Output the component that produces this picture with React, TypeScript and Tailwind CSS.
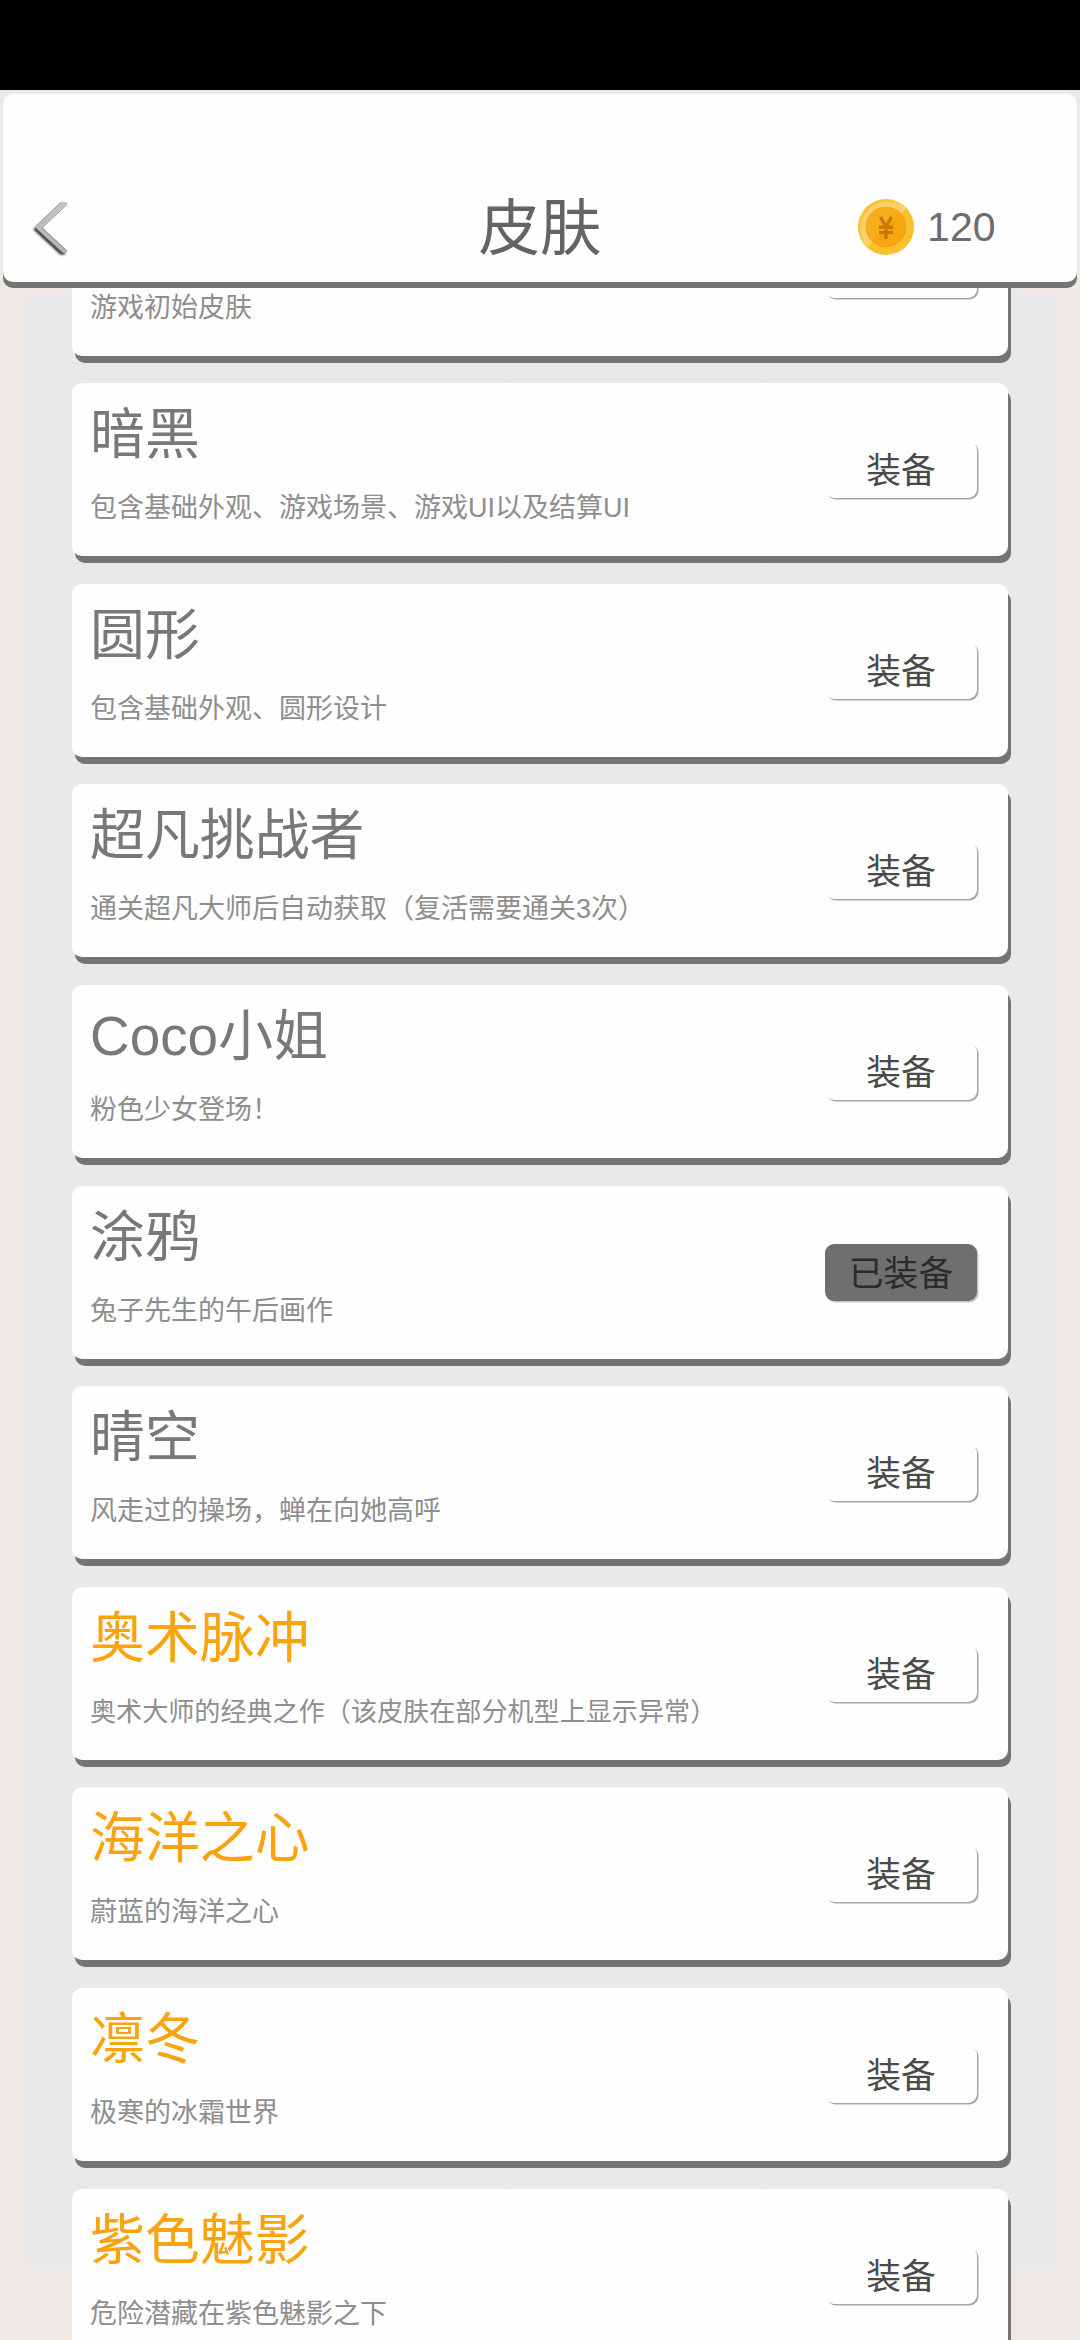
type Skin = { name: string; desc: string; action: string; premium?: boolean; equipped?: boolean; compact?: boolean };

const skins: Skin[] = [
  { name: '', desc: '游戏初始皮肤', action: '' },
  { name: '暗黑', desc: '包含基础外观、游戏场景、游戏UI以及结算UI', action: '装备' },
  { name: '圆形', desc: '包含基础外观、圆形设计', action: '装备' },
  { name: '超凡挑战者', desc: '通关超凡大师后自动获取（复活需要通关3次）', action: '装备' },
  { name: 'Coco小姐', desc: '粉色少女登场！', action: '装备' },
  { name: '涂鸦', desc: '兔子先生的午后画作', action: '已装备', equipped: true },
  { name: '晴空', desc: '风走过的操场，蝉在向她高呼', action: '装备' },
  { name: '奥术脉冲', desc: '奥术大师的经典之作（该皮肤在部分机型上显示异常）', action: '装备', premium: true, compact: true },
  { name: '海洋之心', desc: '蔚蓝的海洋之心', action: '装备', premium: true },
  { name: '凛冬', desc: '极寒的冰霜世界', action: '装备', premium: true },
  { name: '紫色魅影', desc: '危险潜藏在紫色魅影之下', action: '装备', premium: true },
];

function BackArrow() {
  return (
    <svg width="40" height="58" viewBox="0 0 40 58" fill="none">
      <defs>
        <linearGradient id="arm" x1="0" y1="0" x2="0" y2="1">
          <stop offset="0" stopColor="#c6c6c6" />
          <stop offset="1" stopColor="#b2b2b2" />
        </linearGradient>
        <filter id="soft" x="-20%" y="-20%" width="140%" height="140%">
          <feGaussianBlur stdDeviation="0.9" />
        </filter>
        <filter id="edge" x="-10%" y="-10%" width="120%" height="120%">
          <feGaussianBlur stdDeviation="0.45" />
        </filter>
      </defs>
      <path d="M4.5 29.5 L31 54 H35" stroke="#222" strokeWidth="3" filter="url(#soft)" />
      <g filter="url(#edge)">
        <path d="M30 3.5 Q34 2 38 4 L12.5 28 L38 52.5 L33 54 L4.5 28 Z" fill="url(#arm)" />
        <path d="M37 5.5 L12 29 L37 52" stroke="#949494" strokeWidth="1" />
        <path d="M31 3.5 L5 28" stroke="#9a9a9a" strokeWidth="0.9" />
        <path d="M5 29 L32 54" stroke="#555" strokeWidth="1.2" />
      </g>
    </svg>
  );
}

function Coin() {
  return (
    <svg width="56" height="56" viewBox="0 0 56 56">
      <circle cx="28" cy="28" r="28" fill="#fbc02d" />
      <path d="M9 48.5 A28 28 0 0 1 48.5 9 Z" fill="#fbd069" />
      <circle cx="28" cy="28" r="20.3" fill="#f7a50f" />
      <path d="M13.6 42.4 A20.3 20.3 0 0 1 42.4 13.6 Z" fill="#f7ac1b" />
      <path
        d="M22.5 18 L28 28 L33.5 18 M28 27 V40 M21 28.2 H35 M21 33.6 H35"
        stroke="#c47b0a"
        strokeWidth="3.4"
        fill="none"
      />
    </svg>
  );
}

function SkinCard({ skin }: { skin: Skin }) {
  return (
    <div className="flex h-[173px] w-[936px] shrink-0 items-start justify-between rounded-[10px] bg-[#fefefe] pl-[18px] pr-[31px] shadow-[3px_7px_0_0_#747474]">
      <div className="whitespace-nowrap">
        <div className={`mt-[11px] h-20 text-[54.9px] leading-[80px] ${skin.premium ? 'text-[#faa30f]' : 'text-[#787878]'}`}>
          {skin.name}
        </div>
        <div className={`mt-[14px] leading-[40px] text-[#8e8e8e] ${skin.compact ? 'text-[26.1px]' : 'text-[27px]'}`}>
          {skin.desc}
        </div>
      </div>
      <button
        className={`mt-[58px] h-[57px] w-[152px] rounded-[9px] pt-[2px] text-[34.8px] leading-[55px] whitespace-nowrap ${
          skin.equipped
            ? 'bg-[#6f6f6f] text-[#2b2b2b] shadow-[1.5px_1.5px_0_0_#c4c4c4]'
            : 'bg-[#fefefe] text-[#4a4a4a] shadow-[1.5px_1.5px_0_0_#a6a6a6]'
        }`}
      >
        {skin.action}
      </button>
    </div>
  );
}

export default function App() {
  return (
    <div className="flex h-[2340px] w-[1080px] flex-col overflow-hidden bg-[#eee9e5] font-['Liberation_Sans','Noto_Sans_CJK_SC',sans-serif]">
      <div className="h-[90px] shrink-0 bg-black" />
      <header className="z-10 mx-[3px] mt-1 grid h-[188px] shrink-0 grid-cols-3 items-end rounded-[10px] bg-[#fefefe] shadow-[0_6px_0_0_#747570]">
        <div className="pb-[25px] pl-[27px]">
          <BackArrow />
        </div>
        <h1 className="pb-[8px] text-center text-[61.5px] leading-[90px] text-[#646464]">皮肤</h1>
        <div className="flex items-center justify-end gap-[13px] pr-[81.5px] pb-[27px]">
          <Coin />
          <span className="pt-px text-[41px] leading-[55px] text-[#6d6d6d]">120</span>
        </div>
      </header>
      <main className="mt-[6px] h-[2052px] shrink-0 overflow-hidden">
        <div className="ml-[23px] h-[1979.5px] w-[1032.5px] bg-linear-to-b from-[#eee9e5] from-[5px] to-[#e9e9e9] to-[5px] pl-[49px]">
          <div className="flex flex-col pt-px">
            <div className="-mt-[106.3px] flex flex-col gap-[27.6px]">
              {skins.map((skin) => (
                <SkinCard key={skin.desc} skin={skin} />
              ))}
            </div>
          </div>
        </div>
      </main>
    </div>
  );
}
